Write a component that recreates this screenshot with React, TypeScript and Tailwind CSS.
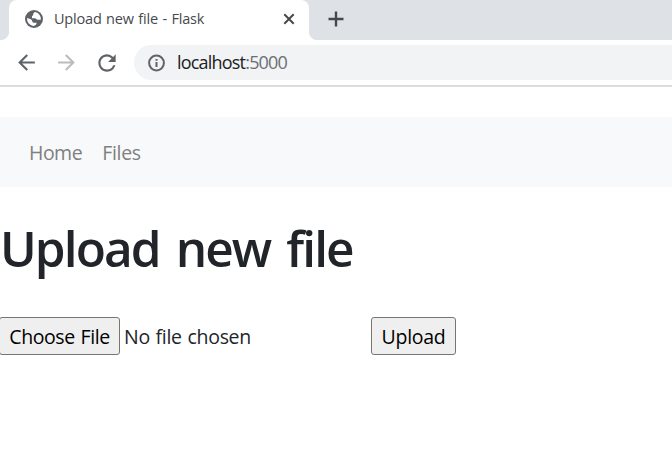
import type { ReactNode } from "react";
import { MdArrowBack, MdArrowForward, MdRefresh } from "react-icons/md";

function Globe() {
  return (
    <svg viewBox="0 0 18 18" className="-mt-[2px] ml-[1px] size-[18px]" aria-hidden="true">
      <circle cx="9" cy="9" r="9" fill="#5f6368" />
      <path
        d="M9.8 2.1C8.5 3 8.2 3.8 8.2 5L7 6.2V8.2H9.6C11.4 8.2 11.4 9.8 12.8 9.8H15.9A7 7 0 0 0 9.8 2.1ZM2.1 8A7 7 0 0 0 8.3 15.9C10.8 15.9 11.6 14 11.6 12.8H8.6C7.3 12.8 7.2 9.7 5.8 9.2Z"
        fill="#fff"
      />
    </svg>
  );
}

function InfoIcon() {
  return (
    <svg viewBox="0 0 19 18" className="h-[18px] w-[19px]" fill="none" stroke="#5f6368" strokeWidth="2" aria-hidden="true">
      <circle cx="9.5" cy="9" r="7.4" />
      <path d="M9.5 8v5M9.5 5v1.8" />
    </svg>
  );
}

function Tab() {
  return (
    <div className="relative flex h-10 w-[300px] items-center rounded-t-lg bg-white pl-[15px] pr-[12px] text-[#5f6368]">
      <div className="absolute bottom-0 -left-2 size-2 bg-[radial-gradient(circle_at_0_0,#dee1e6_7.5px,#fff_8.5px)]" />
      <div className="absolute bottom-0 -right-2 size-2 bg-[radial-gradient(circle_at_100%_0,#dee1e6_7.5px,#fff_8.5px)]" />
      <Globe />
      <span className="-mt-[2px] ml-[11px] flex-1 text-[14.5px] tracking-[-0.2px] [word-spacing:1px] whitespace-nowrap text-[#45494d]">
        Upload new file - Flask
      </span>
      <svg viewBox="0 0 12 12" className="-mt-[2px] mr-[2px] size-3" stroke="#45494d" strokeWidth="2" aria-hidden="true">
        <path d="M1.3 1.3 10.7 10.7M10.7 1.3 1.3 10.7" />
      </svg>
    </div>
  );
}

function BrowserChrome() {
  return (
    <header>
      <div className="flex h-10 items-center bg-[#dee1e6] pl-[9px]">
        <Tab />
        <svg viewBox="0 0 16 16" className="-mt-[2px] ml-[19px] size-4" stroke="#45494d" strokeWidth="2.4" aria-hidden="true">
          <path d="M8 .5v15M.5 8h15" />
        </svg>
      </div>
      <div className="flex h-[47px] items-center border-b-2 border-[#dadce0] bg-white pl-[14px] text-[#5f6368]">
        <MdArrowBack className="size-[25px]" />
        <MdArrowForward className="ml-[15px] size-[25px] text-[#babcbe]" />
        <MdRefresh className="ml-[15px] size-[26px]" />
        <div className="ml-[14px] flex h-[35px] flex-1 items-center rounded-l-full bg-[#f1f3f4] pl-[13px]">
          <InfoIcon />
          <span className="ml-[11px] text-[18px] tracking-[-0.8px] text-[#202124]">
            localhost<span className="text-[#6b6f74]">:5000</span>
          </span>
        </div>
      </div>
    </header>
  );
}

function FormButton({ className, children }: { className: string; children: ReactNode }) {
  return (
    <button
      type="button"
      className={`flex h-[38px] items-center justify-center border border-[#767676] bg-[#efefef] pt-[2px] text-[19.5px] whitespace-nowrap text-black ${className}`}
    >
      {children}
    </button>
  );
}

export default function App() {
  return (
    <div className="h-[475px] w-full overflow-hidden bg-white font-['Open_Sans','Noto_Sans',sans-serif] text-[#212529]">
      <BrowserChrome />
      <nav className="mt-[30px] flex h-[70px] items-center gap-[20px] bg-[#f8f9fa] pt-[2px] pl-[29px] text-[19.5px] text-[#7f8080]">
        <a className="tracking-[-0.5px]">Home</a>
        <a className="tracking-[-0.3px]">Files</a>
      </nav>
      <main>
        <h1 className="mt-[31px] h-[60px] text-[49.5px] leading-[60px] font-[550] tracking-[-1.9px] [word-spacing:5px] whitespace-nowrap">
          Upload new file
        </h1>
        <form className="mt-[39px] flex items-center">
          <FormButton className="-ml-px w-[121px] rounded-[3px] tracking-[-0.4px] [word-spacing:1px]">Choose File</FormButton>
          <span className="ml-1 w-[247px] pt-[2px] text-[19.5px] tracking-[-0.3px] [word-spacing:1px] whitespace-nowrap">No file chosen</span>
          <FormButton className="w-[85px] rounded-[3px] tracking-[-0.3px]">Upload</FormButton>
        </form>
      </main>
    </div>
  );
}
